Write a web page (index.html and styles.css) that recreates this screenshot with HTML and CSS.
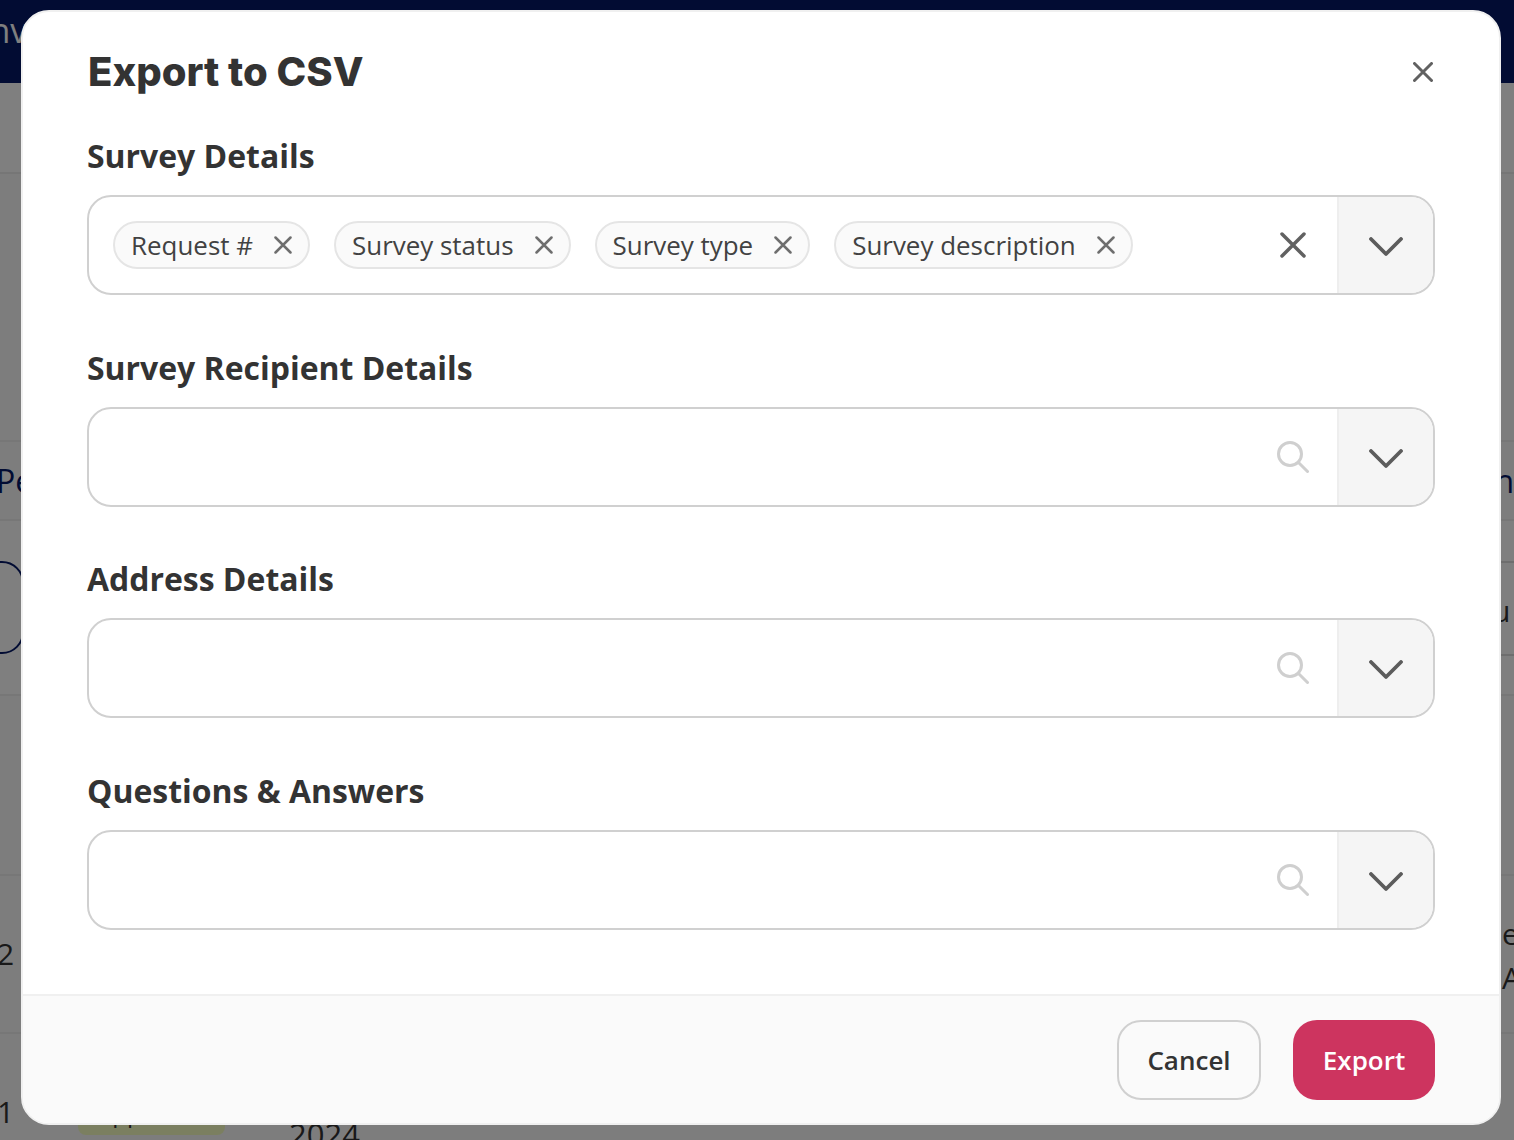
FILE: index.html
```html
<!DOCTYPE html>
<html lang="en">
<head>
<meta charset="utf-8">
<title>Export to CSV</title>
<link rel="stylesheet" href="styles.css">
</head>
<body>
<div class="page">
  <header class="topbar"><span class="brand">Inv</span></header>
  <div class="band"></div>
  <div class="spacer"></div>
  <div class="row tabs"><span class="tab-left">Pe</span><span class="tab-right">n</span></div>
  <div class="row filter">
    <div class="outline"></div>
    <div class="filter-right"><span>u</span></div>
  </div>
  <div class="row blank"></div>
  <div class="row data"><span class="cell-left">2</span><span class="cell-right">e<br>A</span></div>
  <div class="row last"><span class="cell-left">1</span><span class="badge">Approved</span><span class="year">2024</span></div>
</div>

<div class="overlay">
  <section class="modal">
    <div class="modal-body">
      <div class="modal-head">
        <h1 class="title">Export to CSV</h1>
        <svg class="close" viewBox="0 0 20 20"><path d="M1.5 1.5l17 17M18.5 1.5l-17 17"/></svg>
      </div>

      <div class="group first">
        <h2 class="label">Survey Details</h2>
        <div class="field">
          <div class="chips">
            <span class="chip">Request #<svg class="chip-x" viewBox="0 0 18 18"><path d="M1.5 1.5l15 15M16.5 1.5l-15 15"/></svg></span>
            <span class="chip">Survey status<svg class="chip-x" viewBox="0 0 18 18"><path d="M1.5 1.5l15 15M16.5 1.5l-15 15"/></svg></span>
            <span class="chip">Survey type<svg class="chip-x" viewBox="0 0 18 18"><path d="M1.5 1.5l15 15M16.5 1.5l-15 15"/></svg></span>
            <span class="chip">Survey description<svg class="chip-x" viewBox="0 0 18 18"><path d="M1.5 1.5l15 15M16.5 1.5l-15 15"/></svg></span>
          </div>
          <svg class="clear" viewBox="0 0 26 26"><path d="M2 2l22 22M24 2L2 24"/></svg>
          <div class="toggle"><svg class="chev" viewBox="0 0 34 20"><path d="M2 2l15 15L32 2"/></svg></div>
        </div>
      </div>

      <div class="group">
        <h2 class="label">Survey Recipient Details</h2>
        <div class="field">
          <div class="chips"></div>
          <svg class="search" viewBox="0 0 32 32"><circle cx="13" cy="13" r="11.500"/><path d="M21.500 21.500L30.500 30.500"/></svg>
          <div class="toggle"><svg class="chev" viewBox="0 0 34 20"><path d="M2 2l15 15L32 2"/></svg></div>
        </div>
      </div>

      <div class="group">
        <h2 class="label">Address Details</h2>
        <div class="field">
          <div class="chips"></div>
          <svg class="search" viewBox="0 0 32 32"><circle cx="13" cy="13" r="11.500"/><path d="M21.500 21.500L30.500 30.500"/></svg>
          <div class="toggle"><svg class="chev" viewBox="0 0 34 20"><path d="M2 2l15 15L32 2"/></svg></div>
        </div>
      </div>

      <div class="group">
        <h2 class="label">Questions &amp; Answers</h2>
        <div class="field">
          <div class="chips"></div>
          <svg class="search" viewBox="0 0 32 32"><circle cx="13" cy="13" r="11.500"/><path d="M21.500 21.500L30.500 30.500"/></svg>
          <div class="toggle"><svg class="chev" viewBox="0 0 34 20"><path d="M2 2l15 15L32 2"/></svg></div>
        </div>
      </div>
    </div>

    <footer class="modal-foot">
      <button class="btn btn-cancel" type="button">Cancel</button>
      <button class="btn btn-export" type="button">Export</button>
    </footer>
  </section>
</div>
</body>
</html>
```

FILE: styles.css
```css
* { box-sizing: border-box; }
html, body { margin: 0; padding: 0; height: 100%; overflow: hidden; }
body {
  position: relative;
  width: 1514px;
  height: 1140px;
  background: #fafafa;
  font-family: "Open Sans", "Noto Sans", sans-serif;
  color: #333;
}

/* page behind the dialog */
.page { height: 1140px; overflow: hidden; }
.topbar {
  height: 83px;
  background: #041866;
  color: #fff;
  display: flex;
  align-items: center;
  font-size: 34px;
  padding-bottom: 24px;
}
.brand { margin-left: -20px; }
.band { height: 91px; background: #fff; border-bottom: 2px solid #ececec; }
.spacer { height: 266px; }
.row { display: flex; justify-content: space-between; position: relative; }
.tabs {
  height: 81px;
  border-top: 2px solid #eee;
  border-bottom: 2px solid #eee;
  align-items: center;
  color: #041866;
  font-size: 32px;
}
.tab-left { margin-left: -4px; }
.tab-right { margin-right: 0; }
.filter { height: 175px; border-bottom: 2px solid #eee; align-items: flex-start; background: #fff; }
.outline {
  width: 60px;
  height: 93px;
  margin: 40px 0 0 -36px;
  border: 2px solid #041866;
  border-radius: 22px;
}
.filter-right {
  width: 300px;
  height: 95px;
  margin: 40px -278px 0 0;
  border-top: 2px solid #ddd;
  border-bottom: 2px solid #ddd;
  font-size: 30px;
  line-height: 96px;
  color: #333;
}
.blank { height: 180px; border-bottom: 2px solid #eee; }
.data {
  height: 158px;
  border-bottom: 2px solid #eee;
  font-size: 30px;
  color: #333;
  align-items: flex-start;
}
.data .cell-left { margin: 58px 0 0 -3px; line-height: 40px; }
.data .cell-right { margin: 36px -16px 0 0; line-height: 44px; width: 28px; }
.last { height: 106px; font-size: 30px; color: #333; }
.last .cell-left { position: absolute; left: -3px; top: 58px; line-height: 40px; }
.badge {
  position: absolute;
  left: 78px;
  top: 50px;
  width: 147px;
  height: 51px;
  padding-top: 6px;
  display: flex;
  align-items: center;
  justify-content: center;
  border-radius: 8px;
  background: #f6ffc0;
  font-size: 24px;
  color: #333;
}
.year { position: absolute; left: 289px; top: 80px; font-size: 31px; line-height: 40px; }

/* dialog */
.overlay {
  position: absolute;
  inset: 0;
  background: rgba(0, 0, 0, 0.5);
  padding: 10px 13px 0 21px;
}
.modal {
  width: 1480px;
  height: 1115px;
  background: #fff;
  border: 2px solid #f0f0f0;
  border-radius: 28px;
  overflow: hidden;
  display: flex;
  flex-direction: column;
}
.modal-body { flex: 1; padding: 0 64px 0 64px; }
.modal-head {
  height: 119px;
  display: flex;
  justify-content: space-between;
  align-items: center;
}
.title {
  margin: 0 0 0 1px;
  font-family: Inter, "Open Sans", sans-serif;
  font-size: 40px;
  font-weight: 800;
  color: #333;
}
.close { width: 20px; height: 20px; margin-right: 2px; }
.close path, .clear path, .chev path {
  fill: none;
  stroke: #616161;
  stroke-linecap: round;
  stroke-linejoin: round;
}
.close path { stroke-width: 3; }
.clear path { stroke-width: 3.500; }
.chev path { stroke-width: 3.800; stroke: #5c5c5c; }
.group { margin-top: 47.670px; }
.group.first { margin-top: 0; }
.label {
  margin: 0 0 14px;
  font-size: 31.950px;
  line-height: 50px;
  font-weight: 700;
  color: #333;
}
.field {
  height: 100px;
  display: flex;
  align-items: center;
  border: 2px solid #d0d0d0;
  border-radius: 24px;
  overflow: hidden;
  background: #fff;
}
.chips { flex: 1; display: flex; gap: 24px; padding-left: 24px; }
.chip {
  height: 48px;
  display: inline-flex;
  align-items: center;
  gap: 21px;
  padding: 0 16px 0 16px;
  border: 2px solid #e5e5e5;
  border-radius: 24px;
  background: #fafafa;
  font-size: 25.950px;
  color: #424242;
}
.chip-x { width: 18px; height: 18px; flex: none; }
.chip-x path { fill: none; stroke: #6e6e6e; stroke-width: 2.500; stroke-linecap: round; }
.clear { width: 26px; height: 26px; margin-right: 31px; flex: none; }
.search { width: 32px; height: 32px; margin-right: 28px; flex: none; }
.search circle, .search path { fill: none; stroke: #cfcfcf; stroke-width: 3; stroke-linecap: round; }
.toggle {
  width: 96px;
  height: 100%;
  flex: none;
  display: flex;
  align-items: center;
  justify-content: center;
  background: #f5f5f5;
  border-left: 2px solid #eee;
}
.chev { width: 34px; height: 20px; margin-top: 4px; }
.modal-foot {
  height: 129px;
  flex: none;
  display: flex;
  justify-content: flex-end;
  align-items: flex-start;
  gap: 32px;
  padding: 24px 64px 0 0;
  background: #fafafa;
  border-top: 2px solid #f0f0f0;
}
.btn {
  height: 80px;
  border-radius: 24px;
  font-family: "Open Sans", "Noto Sans", sans-serif;
  font-size: 26px;
  font-weight: 600;
}
.btn-cancel { width: 144px; background: #fafafa; border: 2px solid #d0d0d0; color: #333; }
.btn-export { width: 142px; background: #cd345f; border: 0; color: #fff; }
```
